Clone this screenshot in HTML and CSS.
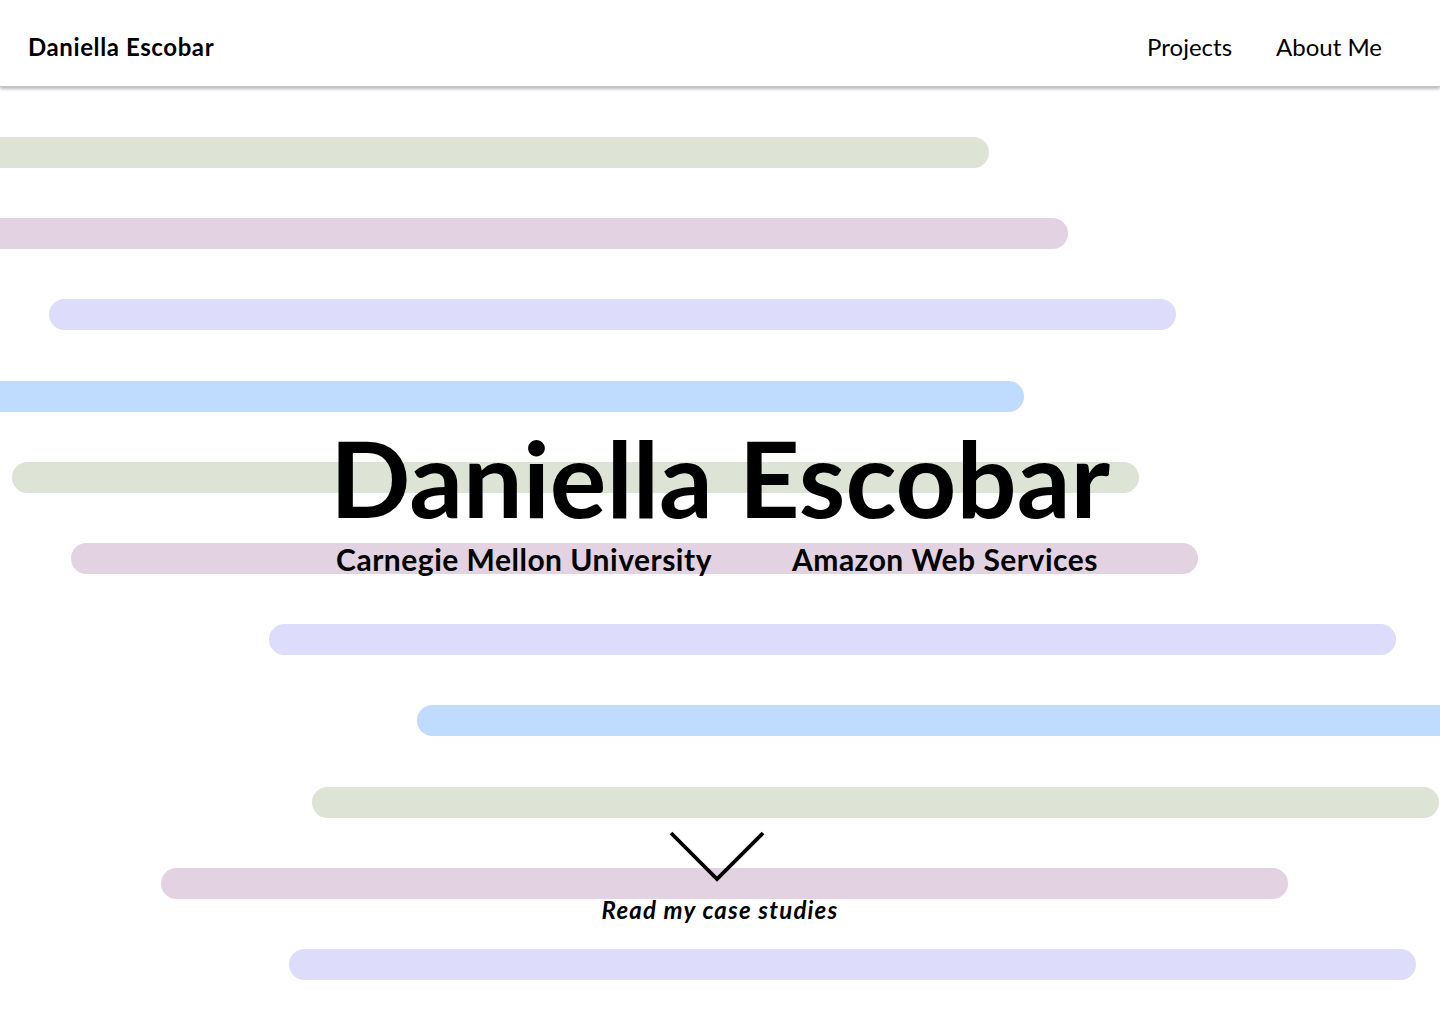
FILE: index.html
```html
<!DOCTYPE html>
<html lang="en">
<head>
<meta charset="utf-8">
<title>Daniella Escobar</title>
<link rel="stylesheet" href="styles.css">
</head>
<body>
<header class="site-header">
  <a class="brand" href="#">Daniella Escobar</a>
  <nav class="nav">
    <a href="#">Projects</a>
    <a href="#">About Me</a>
  </nav>
</header>
<main class="hero">
  <div class="bars" aria-hidden="true">
    <div class="bar green b1"></div>
    <div class="bar mauve b2"></div>
    <div class="bar lav b3"></div>
    <div class="bar blue b4"></div>
    <div class="bar green b5"></div>
    <div class="bar mauve b6"></div>
    <div class="bar lav b7"></div>
    <div class="bar blue b8"></div>
    <div class="bar green b9"></div>
    <div class="bar mauve b10"></div>
    <div class="bar lav b11"></div>
  </div>
  <div class="content">
    <h1 class="title">Daniella Escobar</h1>
    <div class="affil">
      <span>Carnegie Mellon University</span>
      <span>Amazon Web Services</span>
    </div>
    <a class="cta" href="#">
      <svg class="chev" width="96" height="52" viewBox="0 0 96 52"><path d="M2 2 L48 48 L94 2" fill="none" stroke="#000" stroke-width="3.8"/></svg>
      <span class="cta-text">Read my case studies</span>
    </a>
  </div>
</main>
</body>
</html>
```

FILE: styles.css
```css
* { box-sizing: border-box; }
html, body { margin: 0; padding: 0; }
body {
  font-family: Lato, "Noto Sans", sans-serif;
  color: #000;
  background: #fff;
  overflow-x: hidden;
}
a { color: inherit; text-decoration: none; }

.site-header {
  height: 87px;
  display: flex;
  align-items: center;
  justify-content: space-between;
  padding: 6px 58px 0 28px;
  border-bottom: 1px solid #b9c6d8;
  box-shadow: 0 2px 3px rgba(0,0,0,0.28);
  position: relative;
  z-index: 2;
  background: #fff;
}
.brand {
  font-size: 24px;
  font-weight: 700;
  letter-spacing: 0.6px;
}
.nav {
  display: flex;
  gap: 44px;
}
.nav a {
  font-size: 24px;
  font-weight: 400;
}

.hero {
  display: grid;
  grid-template-columns: minmax(0, 1fr);
  overflow: hidden;
  height: 937px;
}
.bars, .content { grid-area: 1 / 1; min-width: 0; }

.bars {
  display: flex;
  flex-direction: column;
  gap: 50.2px;
  padding-top: 50px;
}
.bar {
  height: 31px;
  width: 1127px;
  border-radius: 16px;
  flex: none;
}
.green { background: #dde4d6; }
.mauve { background: #e2d2e2; }
.lav { background: #dddcfa; }
.blue { background: #bfdcfe; }

.b1 { margin-left: -138px; }
.b2 { margin-left: -59px; }
.b3 { margin-left: 49px; }
.b4 { margin-left: -103px; }
.b5 { margin-left: 12px; }
.b6 { margin-left: 71px; }
.b7 { margin-left: 269px; }
.b8 { margin-left: 417px; }
.b9 { margin-left: 312px; }
.b10 { margin-left: 161px; }
.b11 { margin-left: 289px; }

.content {
  display: flex;
  flex-direction: column;
  align-items: center;
  padding-top: 337px;
  position: relative;
}
.title {
  margin: 0;
  font-size: 106px;
  font-weight: 700;
  line-height: 1;
}
.affil {
  display: flex;
  gap: 80px;
  font-size: 30px;
  font-weight: 700;
  letter-spacing: 0.5px;
  line-height: 1.2;
  margin-top: 11px;
  margin-left: -6px;
}
.cta {
  display: flex;
  flex-direction: column;
  align-items: center;
  margin-top: 254px;
}
.chev { display: block; margin-right: 6px; }
.cta-text {
  font-size: 24px;
  font-style: italic;
  font-weight: 700;
  letter-spacing: 1.2px;
  margin-top: 12px;
}
```
